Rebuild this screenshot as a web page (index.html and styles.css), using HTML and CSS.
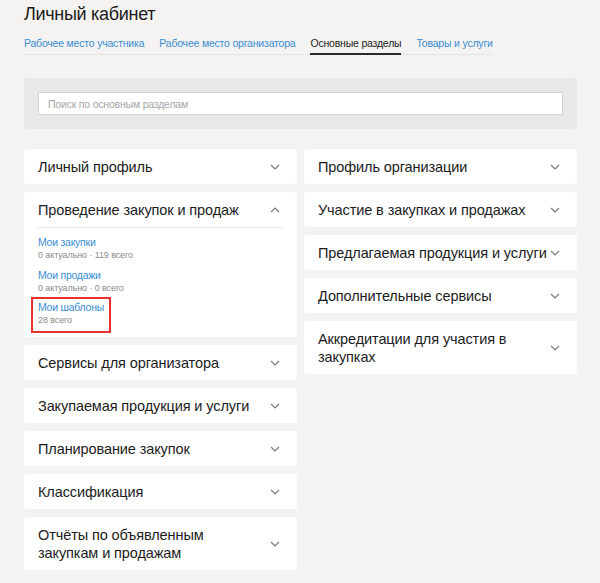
FILE: index.html
```html
<!DOCTYPE html>
<html lang="ru">
<head>
<meta charset="utf-8">
<title>Личный кабинет</title>
<link rel="stylesheet" href="styles.css">
</head>
<body>
<div class="page">
  <h1 class="title">Личный кабинет</h1>
  <nav class="tabs">
    <a class="tab">Рабочее место участника</a>
    <a class="tab">Рабочее место организатора</a>
    <a class="tab active">Основные разделы</a>
    <a class="tab">Товары и услуги</a>
  </nav>
  <div class="search-panel">
    <input class="search" type="text" placeholder="Поиск по основным разделам">
  </div>
  <div class="columns">
    <div class="col">
      <div class="card"><div class="card-head"><span class="card-title">Личный профиль</span><svg class="chev" viewBox="0 0 16 8" width="16" height="8"><path d="M4 2l4 4 4-4" fill="none" stroke="#7a7a7a" stroke-width="1.2"/></svg></div></div>
      <div class="card open">
        <div class="card-head"><span class="card-title">Проведение закупок и продаж</span><svg class="chev" viewBox="0 0 16 8" width="16" height="8"><path d="M4 6l4-4 4 4" fill="none" stroke="#7a7a7a" stroke-width="1.2"/></svg></div>
        <div class="card-body">
          <div class="item"><a class="item-link">Мои закупки</a><span class="item-sub">0 актуально · 119 всего</span></div>
          <div class="item"><a class="item-link">Мои продажи</a><span class="item-sub">0 актуально · 0 всего</span></div>
          <div class="item marked"><a class="item-link">Мои шаблоны</a><span class="item-sub">28 всего</span></div>
        </div>
      </div>
      <div class="card"><div class="card-head"><span class="card-title">Сервисы для организатора</span><svg class="chev" viewBox="0 0 16 8" width="16" height="8"><path d="M4 2l4 4 4-4" fill="none" stroke="#7a7a7a" stroke-width="1.2"/></svg></div></div>
      <div class="card"><div class="card-head"><span class="card-title">Закупаемая продукция и услуги</span><svg class="chev" viewBox="0 0 16 8" width="16" height="8"><path d="M4 2l4 4 4-4" fill="none" stroke="#7a7a7a" stroke-width="1.2"/></svg></div></div>
      <div class="card"><div class="card-head"><span class="card-title">Планирование закупок</span><svg class="chev" viewBox="0 0 16 8" width="16" height="8"><path d="M4 2l4 4 4-4" fill="none" stroke="#7a7a7a" stroke-width="1.2"/></svg></div></div>
      <div class="card"><div class="card-head"><span class="card-title">Классификация</span><svg class="chev" viewBox="0 0 16 8" width="16" height="8"><path d="M4 2l4 4 4-4" fill="none" stroke="#7a7a7a" stroke-width="1.2"/></svg></div></div>
      <div class="card"><div class="card-head"><span class="card-title">Отчёты по объявленным закупкам и продажам</span><svg class="chev" viewBox="0 0 16 8" width="16" height="8"><path d="M4 2l4 4 4-4" fill="none" stroke="#7a7a7a" stroke-width="1.2"/></svg></div></div>
    </div>
    <div class="col">
      <div class="card"><div class="card-head"><span class="card-title">Профиль организации</span><svg class="chev" viewBox="0 0 16 8" width="16" height="8"><path d="M4 2l4 4 4-4" fill="none" stroke="#7a7a7a" stroke-width="1.2"/></svg></div></div>
      <div class="card"><div class="card-head"><span class="card-title">Участие в закупках и продажах</span><svg class="chev" viewBox="0 0 16 8" width="16" height="8"><path d="M4 2l4 4 4-4" fill="none" stroke="#7a7a7a" stroke-width="1.2"/></svg></div></div>
      <div class="card"><div class="card-head"><span class="card-title nowrap">Предлагаемая продукция и услуги</span><svg class="chev" viewBox="0 0 16 8" width="16" height="8"><path d="M4 2l4 4 4-4" fill="none" stroke="#7a7a7a" stroke-width="1.2"/></svg></div></div>
      <div class="card"><div class="card-head"><span class="card-title">Дополнительные сервисы</span><svg class="chev" viewBox="0 0 16 8" width="16" height="8"><path d="M4 2l4 4 4-4" fill="none" stroke="#7a7a7a" stroke-width="1.2"/></svg></div></div>
      <div class="card"><div class="card-head"><span class="card-title">Аккредитации для участия в закупках</span><svg class="chev" viewBox="0 0 16 8" width="16" height="8"><path d="M4 2l4 4 4-4" fill="none" stroke="#7a7a7a" stroke-width="1.2"/></svg></div></div>
    </div>
  </div>
</div>
</body>
</html>
```

FILE: styles.css
```css
* { box-sizing: border-box; }
html, body {
  margin: 0;
  padding: 0;
  background: #f4f3f1;
}
body {
  font-family: "Liberation Sans", Arial, sans-serif;
  color: #1c1c1c;
}
.page {
  padding: 4px 23px 0 24px;
}
.title {
  margin: 0;
  font-size: 18px;
  font-weight: normal;
  line-height: 21px;
  letter-spacing: -0.3px;
  color: #1a1a1a;
}
.tabs {
  display: flex;
  gap: 15px;
  width: fit-content;
  margin-top: 12px;
  border-bottom: 1px solid #e4e4e2;
  font-size: 10.5px;
  letter-spacing: -0.2px;
  line-height: 13px;
}
.tab {
  color: #3a8dd3;
  padding-bottom: 3px;
  border-bottom: 2px solid transparent;
  margin-bottom: -1px;
  cursor: pointer;
}
.tab.active {
  color: #222;
  border-bottom-color: #2a2a2a;
}
.search-panel {
  margin-top: 23px;
  background: #e8e8e7;
  border-radius: 4px;
  padding: 14px;
}
.search {
  display: block;
  width: 100%;
  height: 23px;
  border: 1px solid #d2d2d2;
  background: #fff;
  font-family: inherit;
  font-size: 10.5px;
  letter-spacing: -0.2px;
  padding: 0 9px;
  outline: none;
}
.search::placeholder { color: #a6a6a6; }
.columns {
  margin-top: 20px;
  display: grid;
  grid-template-columns: 273px 273px;
  column-gap: 7px;
  align-items: start;
}
.col {
  display: flex;
  flex-direction: column;
  gap: 8px;
}
.card {
  background: #fff;
  border-radius: 4px;
}
.card-head {
  display: flex;
  align-items: center;
  padding: 8.5px 14px;
  font-size: 14.5px;
  letter-spacing: -0.1px;
  line-height: 18px;
}
.card-title {
  flex: 1;
  min-width: 0;
}
.card-title.nowrap { white-space: nowrap; }
.chev {
  flex-shrink: 0;
  display: block;
}
.card-body {
  margin: 0 14px;
  border-top: 1px solid #e6e6e6;
  padding: 8px 0 11px;
  display: flex;
  flex-direction: column;
  align-items: flex-start;
  gap: 7.5px;
}
.item {
  display: flex;
  flex-direction: column;
  position: relative;
}
.item-link {
  color: #3a8dd3;
  font-size: 10.5px;
  letter-spacing: -0.25px;
  line-height: 13px;
  cursor: pointer;
}
.item-sub {
  color: #8a8a8a;
  font-size: 9px;
  letter-spacing: -0.1px;
  line-height: 12px;
}
.item.marked::after {
  content: "";
  position: absolute;
  left: -7px;
  right: -7px;
  top: -4.5px;
  bottom: -6.5px;
  border: 2px solid #e8322e;
}
```
